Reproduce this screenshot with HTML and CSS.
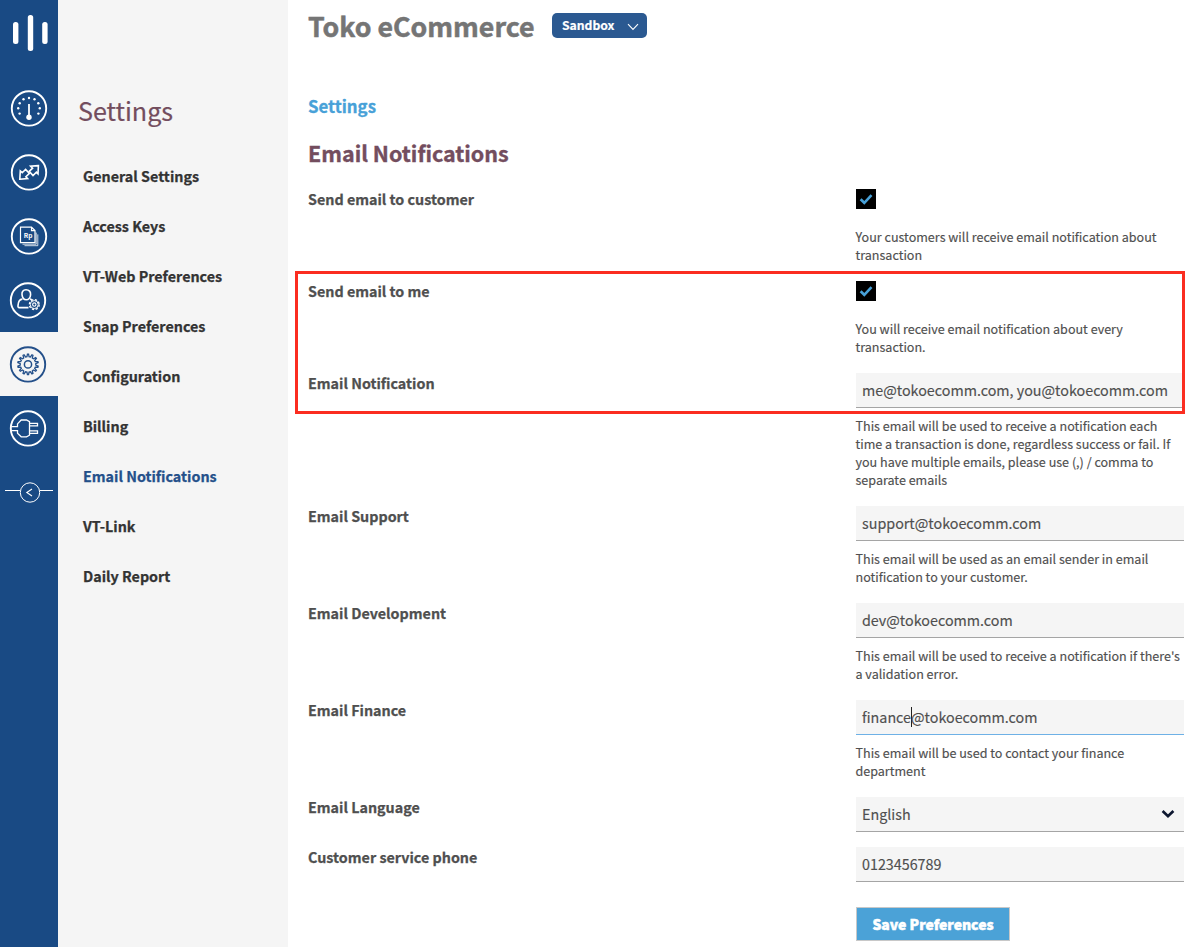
FILE: index.html
```html
<!DOCTYPE html>
<html lang="en">
<head>
<meta charset="utf-8">
<title>Email Notifications</title>
<link rel="stylesheet" href="styles.css">
</head>
<body>
<div class="app">
  <nav class="rail">
    <svg class="logo" viewBox="0 0 58 76" fill="#fff"><rect x="13" y="22" width="5.4" height="22" rx="2.5"/><rect x="27.8" y="15" width="5.4" height="36" rx="2.5"/><rect x="42.2" y="22" width="5.4" height="22" rx="2.5"/></svg>
    <a class="rail-item shifted">
      <svg class="icon" viewBox="0 -.4 38 38"><circle class="ring" cx="19" cy="19" r="17.2"/><path d="M19 14.5V27" stroke-width="1.8"/><circle cx="19" cy="27.8" r="2.7" fill="currentColor" stroke="none"/><g fill="currentColor" stroke="none"><circle cx="9.6" cy="24.2" r="1.2"/><circle cx="8.2" cy="18.9" r="1.2"/><circle cx="9.7" cy="13.8" r="1.2"/><circle cx="13.5" cy="9.9" r="1.2"/><circle cx="19" cy="8.6" r="1.2"/><circle cx="24.5" cy="9.9" r="1.2"/><circle cx="28.3" cy="13.8" r="1.2"/><circle cx="29.8" cy="18.9" r="1.2"/><circle cx="28.4" cy="24.2" r="1.2"/></g></svg>
    </a>
    <a class="rail-item shifted">
      <svg class="icon" viewBox="0 -.4 38 38"><circle class="ring" cx="19" cy="19" r="17.2"/><path d="M28.4 12.2L20.6 12.8L22.6 14.8L19.2 18L23 22.2L26.4 18.8L28 20.4Z" stroke-width="1.6"/><path d="M9.8 25.8L17.6 25.2L15.9 23.3L19.4 20L15.6 16L12.2 19.3L10.3 17.6Z" stroke-width="1.6"/></svg>
    </a>
    <a class="rail-item shifted">
      <svg class="icon" viewBox="0 -.4 38 38"><circle class="ring" cx="19" cy="19" r="17.2"/><path d="M10.5 9.8H21.5L25 13.2V25.2H10.5Z M21.5 9.8V13.2H25" stroke-width="1.2"/><path d="M26.2 15.2V26.8H12.5 M27.8 17V28.3H14.5" stroke-width=".8"/><text x="13.8" y="20.8" class="rp">Rp</text></svg>
    </a>
    <a class="rail-item">
      <svg class="icon" viewBox="0 -.4 38 38"><circle class="ring" cx="19" cy="19" r="17.2"/><path d="M19.5 26.2H10.2Q8.8 26.2 9 24.2Q9.3 18 13.4 17.7M21.2 17.2L22.8 18.8" stroke-width="1.6"/><path d="M17 8.4C13.9 8.4 12.7 10.7 13 13.2C13.3 16 15 18.4 17.3 18.4C19.6 18.4 21.4 16 21.6 13.2C21.8 10.4 20.2 8.4 17 8.4Z" stroke-width="1.6"/><circle cx="25.3" cy="23.2" r="4.9" stroke-width="1.4" stroke-dasharray="2.2 1.65"/><circle cx="25.3" cy="23.2" r="4" stroke-width="1"/><circle cx="25.3" cy="23.2" r="1.7" stroke-width="1.1"/></svg>
    </a>
    <a class="rail-item active">
      <svg class="icon" viewBox="0 -.4 38 38"><circle class="ring" cx="19" cy="19" r="17.2"/><g id="gear"></g><circle cx="19" cy="19" r="3.6" stroke-width="1.5"/></svg>
    </a>
    <a class="rail-item">
      <svg class="icon" viewBox="0 -.4 38 38"><circle class="ring" cx="19" cy="19" r="17.2"/><path d="M2.5 17.3H8.5V14.5L12.2 10.6H17.5L20.5 12.2V25.8L17.5 27.4H12.2L8.5 23.8V21.2H2.5" stroke-width="1.3"/><path d="M20.5 14H28.5V16.5H20.5M20.5 21.5H28.5V24H20.5" stroke-width="1.3"/></svg>
    </a>
    <svg class="collapse" viewBox="0 0 58 64"><path d="M5 30.5H20M40 30.5H53" stroke-width="1"/><circle cx="30" cy="32.5" r="9.7" stroke-width="1"/><path d="M32 29L26.8 32.5L32 36" stroke-width="1.1"/></svg>
  </nav>

  <aside class="sidebar">
    <h2 class="sidebar-title">Settings</h2>
    <ul class="menu">
      <li class="menu-item">General Settings</li>
      <li class="menu-item">Access Keys</li>
      <li class="menu-item">VT-Web Preferences</li>
      <li class="menu-item">Snap Preferences</li>
      <li class="menu-item">Configuration</li>
      <li class="menu-item">Billing</li>
      <li class="menu-item current">Email Notifications</li>
      <li class="menu-item">VT-Link</li>
      <li class="menu-item">Daily Report</li>
    </ul>
  </aside>

  <main class="main">
    <header class="topbar">
      <h1 class="store">Toko eCommerce</h1>
      <div class="env"><span>Sandbox</span><svg class="env-arrow" viewBox="0 0 12 8"><path d="M1 1.2L6 6.4L11 1.2" fill="none" stroke="#fff" stroke-width="1.1"/></svg></div>
    </header>
    <div class="crumb">Settings</div>
    <h2 class="title">Email Notifications</h2>

    <div class="form">
      <div class="row">
        <label class="label">Send email to customer</label>
        <div class="field">
          <div class="check"><svg viewBox="0 0 20 20"><path d="M4.6 10.2L8.3 13.8L15.5 6.2" fill="none" stroke="#48a1d8" stroke-width="2.6"/></svg></div>
          <p class="help">Your customers will receive email notification about<br>transaction</p>
        </div>
      </div>
      <div class="row">
        <label class="label">Send email to me</label>
        <div class="field">
          <div class="check"><svg viewBox="0 0 20 20"><path d="M4.6 10.2L8.3 13.8L15.5 6.2" fill="none" stroke="#48a1d8" stroke-width="2.6"/></svg></div>
          <p class="help">You will receive email notification about every<br>transaction.</p>
        </div>
      </div>
      <div class="row">
        <label class="label">Email Notification</label>
        <div class="field">
          <div class="input">me@tokoecomm.com, you@tokoecomm.com</div>
          <p class="help">This email will be used to receive a notification each<br>time a transaction is done, regardless success or fail. If<br>you have multiple emails, please use (,) / comma to<br>separate emails</p>
        </div>
      </div>
      <div class="row">
        <label class="label">Email Support</label>
        <div class="field">
          <div class="input">support@tokoecomm.com</div>
          <p class="help">This email will be used as an email sender in email<br>notification to your customer.</p>
        </div>
      </div>
      <div class="row">
        <label class="label">Email Development</label>
        <div class="field">
          <div class="input">dev@tokoecomm.com</div>
          <p class="help">This email will be used to receive a notification if there's<br>a validation error.</p>
        </div>
      </div>
      <div class="row">
        <label class="label">Email Finance</label>
        <div class="field">
          <div class="input focused">finance<span class="caret"></span>@tokoecomm.com</div>
          <p class="help">This email will be used to contact your finance<br>department</p>
        </div>
      </div>
      <div class="row short-row">
        <label class="label">Email Language</label>
        <div class="field">
          <div class="input select"><span>English</span><svg class="select-arrow" viewBox="0 0 14 10"><path d="M1.6 2L7 7.2L12.4 2" fill="none" stroke="#0d1730" stroke-width="2.7"/></svg></div>
        </div>
      </div>
      <div class="row short-row">
        <label class="label">Customer service phone</label>
        <div class="field"><div class="input">0123456789</div></div>
      </div>
      <div class="row actions"><span></span><button class="save">Save Preferences</button></div>
    </div>
    <div class="highlight"></div>
  </main>
</div>
<script src="gear.js"></script>
</body>
</html>
```
FILE: styles.css
```css
* { box-sizing: border-box; }
body { margin: 0; background: #fff; color: #4f4f4f; font-family: "Noto Sans CJK SC", "Noto Sans", sans-serif; }
h1, h2, p, ul { margin: 0; padding: 0; }
.app { display: flex; width: 1191px; height: 947px; overflow: hidden; }

.rail { width: 58px; flex: none; background: #194a84; color: #fff; display: flex; flex-direction: column; }
.logo { width: 58px; height: 76px; flex: none; }
.rail-item { height: 64px; flex: none; display: flex; align-items: center; padding-left: 9px; }
.rail-item.shifted { padding-left: 10px; }
.rail-item.active { background: #f5f5f5; color: #24508a; }
.icon { width: 38px; height: 38px; fill: none; stroke: currentColor; }
.ring { stroke-width: 1.9; }
.rp { font-size: 6.5px; font-weight: 700; fill: currentColor; stroke: none; }
.collapse { width: 58px; height: 64px; fill: none; stroke: #fff; }

.sidebar { width: 230px; flex: none; background: #f5f5f5; padding: 90px 0 0 20px; }
.sidebar-title { font-size: 25.1px; line-height: 40px; font-weight: 400; color: #734d5e; -webkit-text-stroke: .2px; }
.menu { list-style: none; padding: 21px 0 0 5px; }
.menu-item { height: 50px; line-height: 50px; font-size: 14.32px; font-weight: 700; color: #333; -webkit-text-stroke: .25px; }
.menu-item.current { color: #24508a; }

.main { flex: 1; position: relative; padding: 6px 7px 0 20px; }
.topbar { display: flex; height: 40px; }
.store { width: 244px; font-size: 26.75px; line-height: 40px; font-weight: 700; color: #757575; white-space: nowrap; -webkit-text-stroke: .5px; }
.env { display: flex; align-items: center; justify-content: space-between; margin-top: 7px; width: 95px; height: 25px; padding: 0 8px 0 10px; border-radius: 5px; background: #2b5991; color: #fff; font-size: 12.2px; line-height: 25px; font-weight: 700; }
.env span { height: 25px; -webkit-text-stroke: .2px; }
.env-arrow { width: 12px; height: 8px; margin-top: 3px; }
.crumb { margin-top: 48px; font-size: 16.8px; line-height: 25px; font-weight: 700; color: #48a1d8; -webkit-text-stroke: .3px; }
.title { margin-top: 18px; font-size: 21.5px; line-height: 32px; font-weight: 700; color: #734d5e; -webkit-text-stroke: .35px; }

.form { margin-top: 20px; }
.row { display: grid; grid-template-columns: 548px 328px; padding-bottom: 17px; }
.short-row { padding-bottom: 15px; }
.label { font-size: 14.32px; line-height: 19px; font-weight: 700; -webkit-text-stroke: .25px; }
.input { height: 35px; padding-left: 6px; background: #f5f5f5; border-bottom: 1px solid #a5a5a5; font-size: 14.32px; line-height: 33px; white-space: nowrap; -webkit-text-stroke: .15px; }
.input.focused { border-bottom-color: #6eb1e6; }
.caret { display: inline-block; width: 1px; height: 20px; margin-right: -1px; background: #222; vertical-align: -4px; }
.help { margin: 9px 0 0 -.5px; font-size: 12.55px; line-height: 18px; white-space: nowrap; -webkit-text-stroke: .15px; }
.check { width: 20px; height: 20px; background: #000; }
.check svg { display: block; }
.check + .help { margin-top: 19px; }
.select { display: flex; justify-content: space-between; padding-right: 9px; }
.select-arrow { width: 14px; height: 10px; margin-top: 12px; }
.actions { padding: 10px 0 0; }
.save { width: 154px; height: 34px; padding: 0; border: 1px solid #c8c8c8; background: #4ba2d7; color: #fff; font-family: inherit; font-size: 13.95px; line-height: 32px; font-weight: 900; -webkit-text-stroke: .5px #fff; }
.highlight { position: absolute; left: 7px; top: 271px; width: 890px; height: 143px; border: 3px solid #fb2d20; }
```
FILE: gear.js
```js
// Builds the toothed outline of the settings gear.
const teeth = 14;
const points = [];
for (let i = 0; i < teeth; i++) {
  [[-0.3, 7.8], [-0.12, 10.3], [0.12, 10.3], [0.3, 7.8]].forEach(([offset, radius]) => {
    const angle = (i + offset) / teeth * Math.PI * 2;
    points.push((19 + Math.sin(angle) * radius).toFixed(2) + ',' + (19 - Math.cos(angle) * radius).toFixed(2));
  });
}
document.getElementById('gear').innerHTML = '<polygon stroke-width="1.3" points="' + points.join(' ') + '"/>';
```
